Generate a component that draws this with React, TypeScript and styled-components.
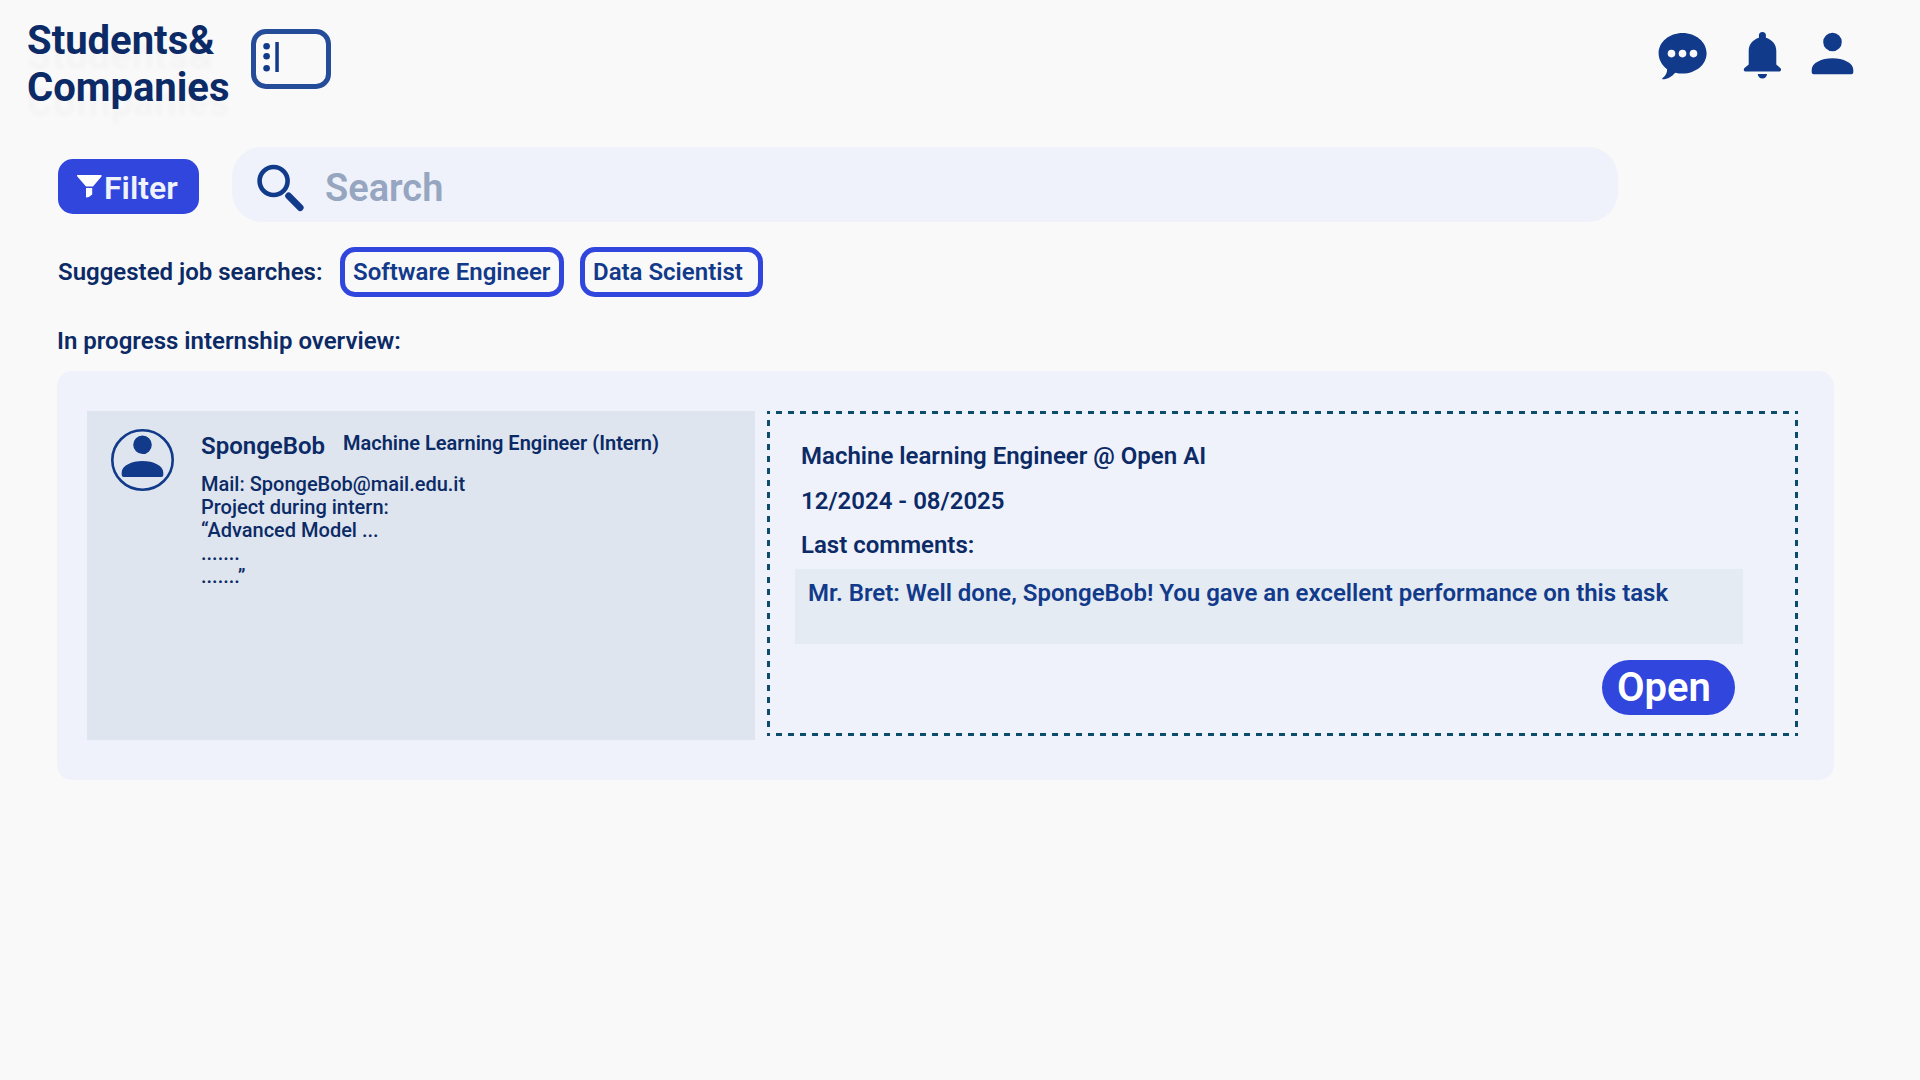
import React from "react";
import styled, { createGlobalStyle } from "styled-components";

const navy = "#0b2a66";
const blue = "#123a8b";
const accent = "#3046dc";
const surface = "#eff2fa";
const dash = "#0b4d6b";

const GlobalStyle = createGlobalStyle`
  * { box-sizing: border-box; }
  body { margin: 0; background: #f9f9f9; font-family: Roboto, sans-serif; font-weight: 600; color: ${navy}; }
`;

const Page = styled.div`
  width: 1920px;
  height: 1080px;
  overflow: hidden;
  background: #f9f9f9;
`;

const Header = styled.header`
  display: flex;
  height: 147px;
  padding: 17px 67px 0 27px;
`;

const Brand = styled.h1`
  margin: 0;
  width: 224px;
  font-size: 40px;
  font-weight: 700;
  line-height: 47px;
  text-shadow: 0 15px 4px rgba(0, 0, 0, 0.022);
`;

const MenuButton = styled.div`
  width: 80px;
  height: 60px;
  margin-top: 12px;
  border: 5px solid #244c99;
  border-radius: 15px;
`;

const Actions = styled.nav`
  display: flex;
  align-items: flex-start;
  margin-left: auto;
  padding-top: 15px;
`;

const Icon = styled.svg<{ $gap?: number }>`
  display: block;
  flex: none;
  overflow: visible;
  fill: ${blue};
  margin-left: ${(p) => p.$gap ?? 0}px;
`;

const SearchRow = styled.div`
  display: flex;
  align-items: center;
  gap: 33px;
  padding-left: 58px;
`;

const FilterButton = styled.button`
  display: flex;
  align-items: center;
  width: 141px;
  height: 55px;
  margin: 4px 0 0;
  padding: 0 0 0 19px;
  border: 0;
  border-radius: 15px;
  background: ${accent};
  color: ${surface};
  font: 600 32px/38px Roboto, sans-serif;
`;

const FilterLabel = styled.span`
  margin-left: 2px;
  padding-top: 2px;
`;

const SearchBox = styled.div`
  display: flex;
  align-items: center;
  width: 1386px;
  height: 75px;
  padding: 5px 0 0 25px;
  border-radius: 30px;
  background: ${surface};
  color: #96a5c0;
  font-size: 38px;
  line-height: 44px;
`;

const SearchLabel = styled.span`
  margin-left: 21px;
  padding-top: 2px;
`;

const Suggestions = styled.div`
  display: flex;
  align-items: center;
  margin: 25px 0 0 58px;
  font-size: 24px;
  line-height: 28px;
`;

const SuggestionsLabel = styled.span`
  width: 282px;
`;

const Chip = styled.span<{ $width: number }>`
  width: ${(p) => p.$width}px;
  height: 50px;
  margin-right: 16px;
  padding: 6px 0 0 8px;
  border: 5px solid ${accent};
  border-radius: 15px;
  color: ${blue};
  white-space: nowrap;
`;

const SectionTitle = styled.h2`
  margin: 30px 0 0 57px;
  font-size: 24px;
  font-weight: 600;
  line-height: 28px;
`;

const Panel = styled.section`
  display: flex;
  align-items: flex-start;
  gap: 12px;
  width: 1777px;
  height: 409px;
  margin: 16px 0 0 57px;
  padding: 40px 30px;
  border-radius: 15px;
  background: ${surface};
`;

const Student = styled.article`
  display: flex;
  gap: 27px;
  width: 668px;
  height: 329px;
  padding: 18px 0 0 24px;
  background: #dee5ee;
`;

const StudentHead = styled.div`
  display: flex;
  align-items: flex-start;
  gap: 18px;
  height: 42px;
`;

const Name = styled.span`
  padding-top: 3px;
  font-size: 24px;
  line-height: 28px;
`;

const Role = styled.span`
  padding-top: 3px;
  font-size: 20px;
  line-height: 23px;
`;

const Details = styled.p`
  margin: 2px 0 0;
  font-size: 20px;
  font-weight: 500;
  line-height: 23px;
`;

const rowDashes = `repeating-linear-gradient(90deg, ${dash} 0 3px, transparent 3px 8.988px, ${dash} 8.988px 11.988px)`;
const columnDashes = `repeating-linear-gradient(180deg, ${dash} 0 3px, transparent 3px 9.037px, ${dash} 9.037px 12.037px)`;

const Job = styled.article`
  display: flex;
  flex-direction: column;
  width: 1031px;
  height: 325px;
  padding: 31px 0 0 28px;
  background:
    ${rowDashes} top / 100% 3px no-repeat,
    ${rowDashes} bottom / 100% 3px no-repeat,
    ${columnDashes} left / 3px 100% no-repeat,
    ${columnDashes} right / 3px 100% no-repeat;
`;

const JobLine = styled.p<{ $height: number }>`
  margin: 0 0 0 6px;
  height: ${(p) => p.$height}px;
  font-size: 24px;
  line-height: 28px;
`;

const Comment = styled.div`
  width: 948px;
  height: 75px;
  padding: 10px 0 0 13px;
  background: #e4ebf2;
  color: ${blue};
  font-size: 24px;
  line-height: 28px;
`;

const OpenButton = styled.button`
  width: 133px;
  height: 55px;
  margin: 16px 0 0 807px;
  padding: 0 0 0 15px;
  border: 0;
  border-radius: 28px;
  background: ${accent};
  color: #fff;
  font: 600 40px/55px Roboto, sans-serif;
  text-align: left;
`;

const personPath =
  "M20.8 0a9.3 9.3 0 1 1 0 18.6a9.3 9.3 0 0 1 0-18.6zM0 37C0 30 10 25.5 20.8 25.5S41.6 30 41.6 37V39.500q0 2-2 2H2q-2 0-2-2z";

export default function App() {
  return (
    <Page>
      <GlobalStyle />
      <Header>
        <Brand>Students&amp;<br />Companies</Brand>
        <MenuButton>
          <Icon width="70" height="50">
            <circle cx="10.600" cy="12.200" r="3.300" />
            <circle cx="10.600" cy="22.200" r="3.300" />
            <circle cx="10.600" cy="34.200" r="3.300" />
            <rect x="19.300" y="8" width="3.500" height="30" />
          </Icon>
        </MenuButton>
        <Actions>
          <Icon width="48" height="48" viewBox="-0.600 0 48 48">
            <path
              d="M24 1C37.200 1 48 10 48 21.300S37.200 41.600 24 41.600c-2.500 0-5-.3-7.200-.9C13 44.500 9 47.300 4.300 47.300c-.8 0-1-.8-.3-1.300 3-2 4.800-5.500 4.500-8.700C3.500 33.500 0 27.700 0 21.300 0 10 10.800 1 24 1z"
            />
            <g fill="#f9f9f9">
              <circle cx="12.900" cy="21.600" r="3.800" />
              <circle cx="23.900" cy="21.600" r="3.800" />
              <circle cx="34.900" cy="21.600" r="3.800" />
            </g>
          </Icon>
          <Icon width="37" height="48" $gap={38}>
            <path d="M14.900 5.800V3.600a3.500 3.500 0 0 1 7 0V5.800C28 7.600 32.300 12.500 32.300 18.800V32.500L36.300 35.900C37.700 37.500 37 39.600 34.800 39.600H2C-.2 39.600-.9 37.500 .5 35.900L4.700 32.500V18.800C4.700 12.500 9 7.600 14.900 5.800zM13.800 42h9.200c0 2.700-2 4.600-4.600 4.600s-4.600-1.900-4.600-4.600z" />
          </Icon>
          <Icon width="42" height="42" $gap={30}>
            <path transform="translate(.7 .7)" d={personPath} />
          </Icon>
        </Actions>
      </Header>

      <SearchRow>
        <FilterButton>
          <Icon width="25" height="23" viewBox="0 0 25 23">
            <path fill="#fff" d="M0 0H24.500V1.500L16 11.500H9L.3 1.500zM9 13H15.200V19.500Q13 22 9 22.500z" />
          </Icon>
          <FilterLabel>Filter</FilterLabel>
        </FilterButton>
        <SearchBox>
          <Icon width="47" height="47">
            <circle cx="16.600" cy="17" r="14" fill="none" stroke={blue} strokeWidth="4.600" />
            <path d="M31.600 31.900L43.200 43.600" stroke={blue} strokeWidth="6.800" strokeLinecap="round" />
          </Icon>
          <SearchLabel>Search</SearchLabel>
        </SearchBox>
      </SearchRow>

      <Suggestions>
        <SuggestionsLabel>Suggested job searches:</SuggestionsLabel>
        <Chip $width={224}>Software Engineer</Chip>
        <Chip $width={183}>Data Scientist</Chip>
      </Suggestions>

      <SectionTitle>In progress internship overview:</SectionTitle>

      <Panel>
        <Student>
          <Icon width="63" height="62">
            <ellipse cx="31.500" cy="31" rx="30.200" ry="29.700" fill="none" stroke={blue} strokeWidth="2.600" />
            <path transform="translate(10.700 6.500)" d={personPath} />
          </Icon>
          <div>
            <StudentHead>
              <Name>SpongeBob</Name>
              <Role>Machine Learning Engineer (Intern)</Role>
            </StudentHead>
            <Details>
              Mail: SpongeBob@mail.edu.it<br />
              Project during intern:<br />
              “Advanced Model ...<br />
              .......<br />
              .......”
            </Details>
          </div>
        </Student>
        <Job>
          <JobLine $height={45}>Machine learning Engineer @ Open AI</JobLine>
          <JobLine $height={44}>12/2024 - 08/2025</JobLine>
          <JobLine $height={38}>Last comments:</JobLine>
          <Comment>Mr. Bret: Well done, SpongeBob! You gave an excellent performance on this task</Comment>
          <OpenButton>Open</OpenButton>
        </Job>
      </Panel>
    </Page>
  );
}
